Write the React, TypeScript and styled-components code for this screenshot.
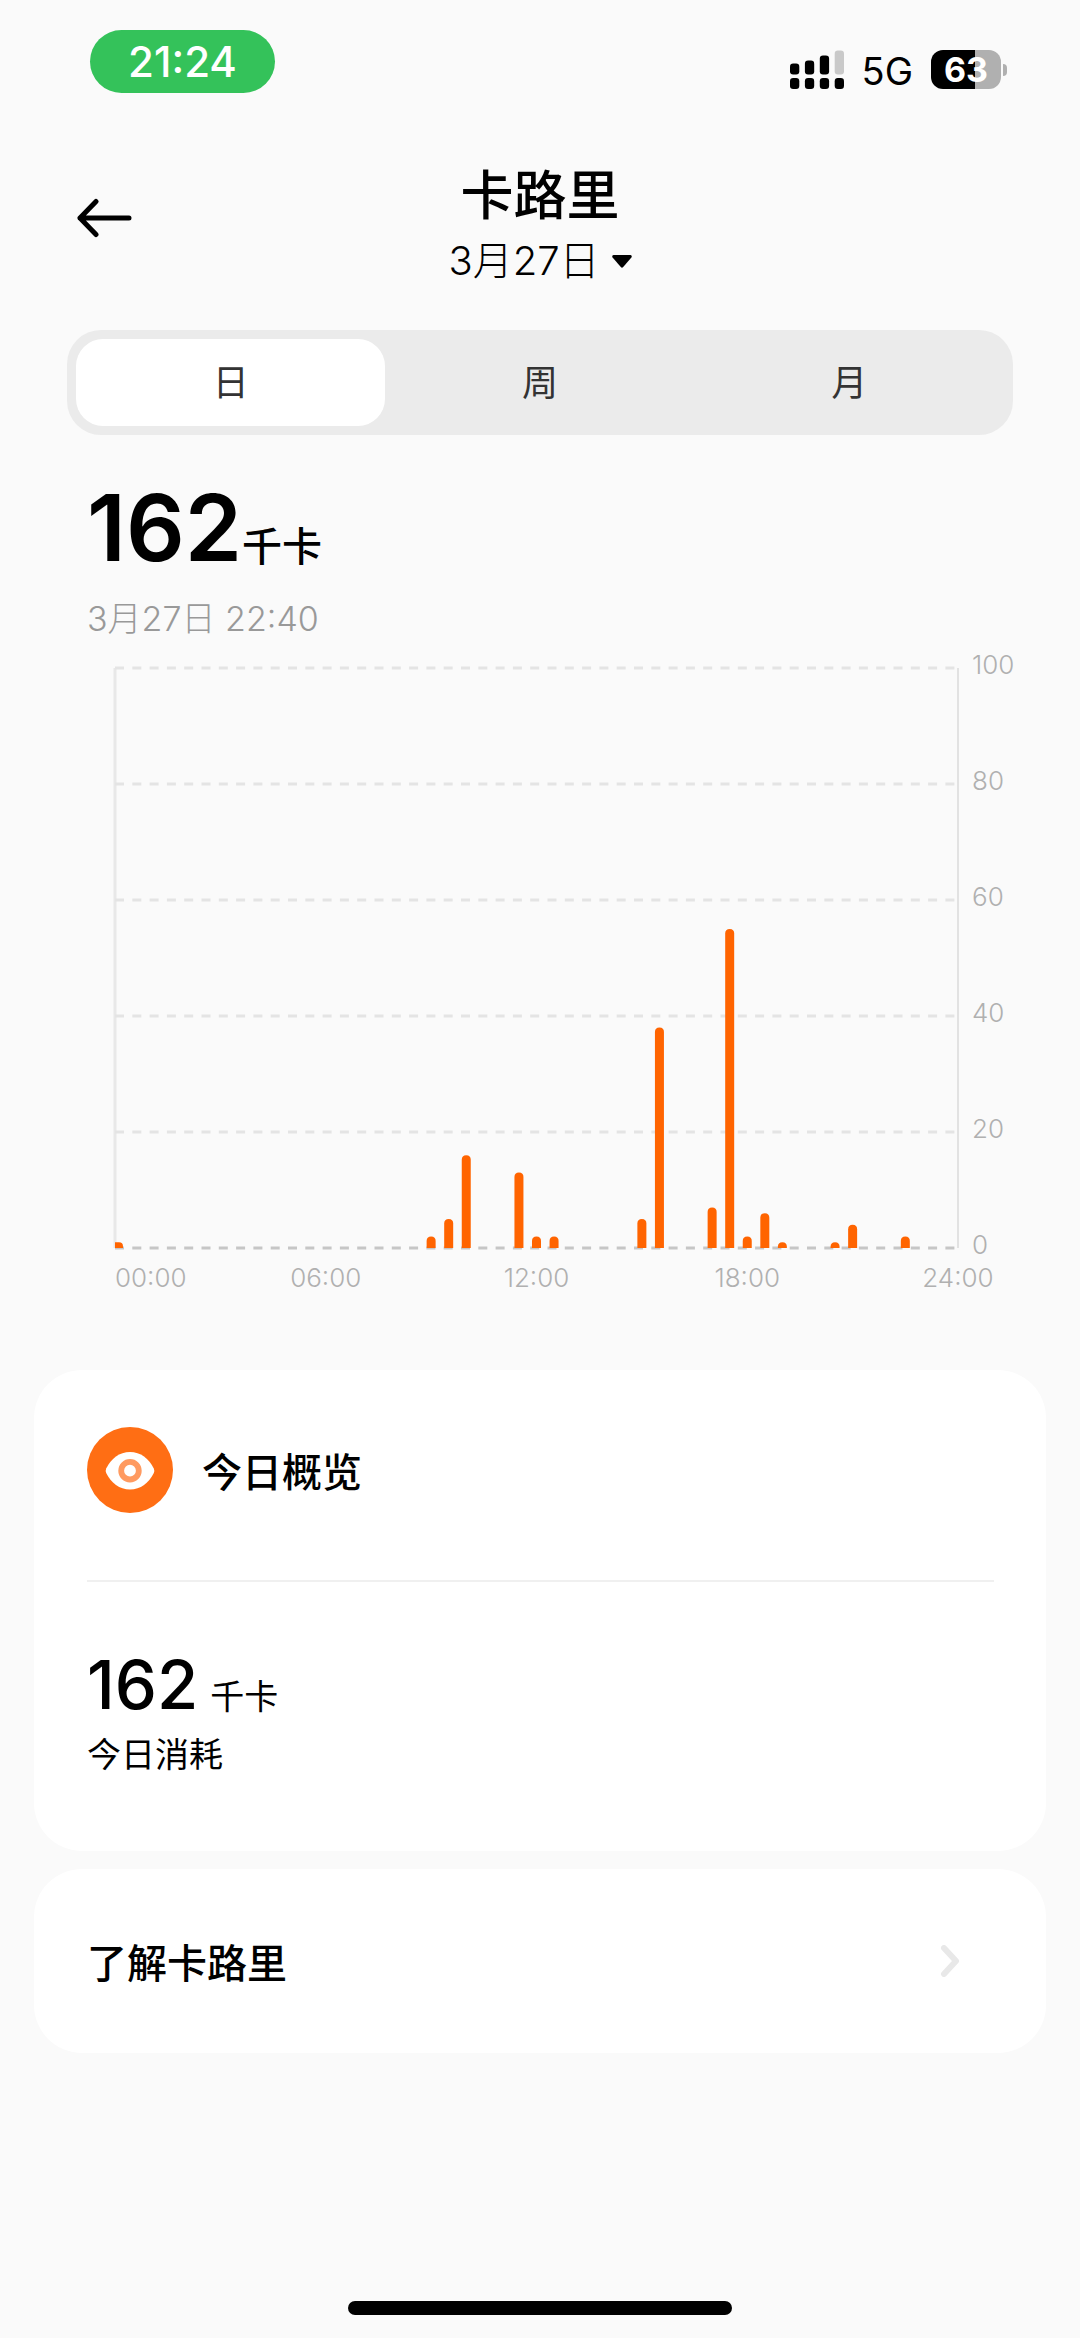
import React, { useState } from "react";
import styled, { createGlobalStyle } from "styled-components";

const GlobalStyle = createGlobalStyle`
  *, *::before, *::after { box-sizing: border-box; }
  body {
    margin: 0;
    background: #fafafa;
    color: #000;
    font-family: Inter, "Noto Sans CJK SC", sans-serif;
  }
  button { border: 0; padding: 0; background: none; color: inherit; font: inherit; cursor: pointer; }
  h1, h2, p { margin: 0; font-weight: inherit; }
`;

const Page = styled.div`
  display: flex;
  flex-direction: column;
  min-height: 100vh;
  padding-bottom: 23px;
`;

const StatusBar = styled.div`
  display: flex;
  justify-content: space-between;
  align-items: flex-end;
  padding: 30px 73px 0 90px;
`;

const TimePill = styled.span`
  display: flex;
  align-items: center;
  justify-content: center;
  width: 185px;
  height: 63px;
  border-radius: 32px;
  background: #34c25a;
  color: #fff;
  font-size: 42px;
  font-weight: 500;
  line-height: 44px;
`;

const StatusIcons = styled.div`
  display: flex;
  align-items: center;
  gap: 18px;
  padding-bottom: 2px;
  font-size: 38px;
  line-height: 40px;
`;

const Network = styled.span`
  padding-top: 3px;
`;

const Battery = styled.span`
  display: flex;
  align-items: center;
  gap: 2px;
`;

const BatteryBody = styled.span`
  display: flex;
  align-items: center;
  justify-content: center;
  width: 70px;
  height: 39px;
  border-radius: 12px;
  background: linear-gradient(to right, #000 63%, #b0b0b0 63%);
  color: #fff;
  font-size: 34px;
  font-weight: 700;
  line-height: 40px;
`;

const BatteryCap = styled.span`
  width: 4px;
  height: 12px;
  border-radius: 0 4px 4px 0;
  background: #b0b0b0;
`;

const Header = styled.header`
  display: grid;
  grid-template-columns: 1fr auto 1fr;
  align-items: start;
  margin-top: 69px;
  padding: 0 76px;
`;

const BackButton = styled.button`
  display: flex;
  align-items: center;
  justify-self: start;
  height: 112px;
`;

const Heading = styled.div`
  display: flex;
  flex-direction: column;
  align-items: center;
  gap: 17px;
`;

const Title = styled.h1`
  font-family: "Noto Sans CJK SC", sans-serif;
  font-size: 53px;
  font-weight: 500;
  line-height: 60px;
`;

const DateButton = styled.button`
  display: flex;
  align-items: center;
  gap: 12px;
  font-size: 40px;
  font-weight: 300;
  line-height: 44px;
`;

const Main = styled.main`
  display: flex;
  flex-direction: column;
`;

const Section = styled.section`
  display: flex;
  flex-direction: column;
  padding: 0 67px;
`;

const Tabs = styled.div`
  display: grid;
  grid-template-columns: repeat(3, 1fr);
  margin-top: 47px;
  padding: 9px;
  border-radius: 34px;
  background: #ebebeb;
`;

const Tab = styled.button<{ $active: boolean }>`
  height: 87px;
  border-radius: 27px;
  background: ${(p) => (p.$active ? "#fff" : "transparent")};
  color: #333;
  font-size: 36px;
  line-height: 44px;
`;

const Reading = styled.div`
  display: flex;
  align-items: baseline;
  margin-top: 45px;
  padding-left: 20px;
`;

const ReadingValue = styled.span`
  font-size: 92px;
  font-weight: 600;
  line-height: 96px;
`;

const ReadingUnit = styled.span`
  font-size: 40px;
  font-weight: 500;
  line-height: 44px;
`;

const ReadingTime = styled.p`
  margin-top: 21px;
  padding-left: 20px;
  color: #999;
  font-size: 34px;
  font-weight: 300;
  line-height: 44px;
`;

const ChartSvg = styled.svg`
  display: block;
  width: 100%;
  height: auto;
  margin-top: 9px;
  overflow: visible;
`;

const AxisText = styled.text`
  fill: #b0b0b0;
  font-family: Inter, sans-serif;
  font-size: 26px;
  font-weight: 300;
`;

const Cards = styled.div`
  display: flex;
  flex-direction: column;
  gap: 18px;
  margin-top: 70px;
  padding: 0 34px;
`;

const Card = styled.section`
  padding: 57px 52px 74px 53px;
  border-radius: 48px;
  background: #fff;
`;

const CardHeader = styled.div`
  display: flex;
  align-items: center;
  gap: 29px;
`;

const CardTitle = styled.h2`
  font-family: "Noto Sans CJK SC", sans-serif;
  font-size: 40px;
  font-weight: 500;
  line-height: 44px;
`;

const Divider = styled.hr`
  height: 2px;
  margin: 67px 0 69px;
  border: 0;
  background: #f0f0f0;
`;

const Total = styled.div`
  display: flex;
  align-items: baseline;
  gap: 12px;
`;

const TotalValue = styled.span`
  font-size: 67px;
  font-weight: 500;
  line-height: 68px;
`;

const TotalUnit = styled.span`
  font-size: 34px;
  line-height: 44px;
`;

const TotalLabel = styled.p`
  margin-top: 14px;
  font-size: 34px;
  line-height: 44px;
`;

const LinkCard = styled.a`
  display: flex;
  align-items: center;
  justify-content: space-between;
  padding: 70px 86px 70px 53px;
  border-radius: 48px;
  background: #fff;
  color: inherit;
  text-decoration: none;
`;

const HomeIndicator = styled.div`
  align-self: center;
  width: 384px;
  height: 14px;
  margin-top: auto;
  border-radius: 7px;
  background: #000;
`;

function SignalIcon() {
  const heights = [11, 14, 19, 24];
  return (
    <svg width="54" height="39" viewBox="0 0 54 39" aria-hidden="true">
      {heights.map((h, i) => (
        <g key={h}>
          <rect x={i * 14.9} y={24.5 - h} width="9.3" height={h} rx="3.2" fill={i === 3 ? "#c9c9c9" : "#000"} />
          <rect x={i * 14.9} y="28" width="9.3" height="11" rx="3.2" fill="#000" />
        </g>
      ))}
    </svg>
  );
}

function BackIcon() {
  return (
    <svg width="56" height="40" viewBox="0 0 56 40" fill="none" stroke="#000" strokeWidth="5" strokeLinecap="round" strokeLinejoin="round" aria-hidden="true">
      <path d="M53 20H4M20 3.5L4 20L20 36.5" />
    </svg>
  );
}

function CaretIcon() {
  return (
    <svg width="20" height="13" viewBox="0 0 20 13" aria-hidden="true">
      <path d="M1.5 0H18.5Q20.5 .6 19.4 2.4L11.2 12Q10 13.3 8.8 12L.6 2.4Q-.5 .6 1.5 0Z" />
    </svg>
  );
}

function EyeIcon() {
  return (
    <svg width="86" height="86" viewBox="0 0 86 86" aria-hidden="true">
      <circle cx="43" cy="43" r="43" fill="#ff6e14" />
      <path d="M19.200 41.500C24 31.500 32.500 25 43 25S62 31.500 66.800 41.500Q67.800 43.700 66.800 46C62 56 53.500 62.500 43 62.500S24 56 19.200 46Q18.200 43.700 19.200 41.500Z" fill="#fff" />
      <circle cx="43" cy="43.700" r="8.800" fill="none" stroke="#ff9a60" strokeWidth="5.800" />
    </svg>
  );
}

function ChevronIcon() {
  return (
    <svg width="20" height="32" viewBox="0 0 20 32" fill="none" stroke="#e8e8e8" strokeWidth="6" strokeLinecap="round" strokeLinejoin="round" aria-hidden="true">
      <path d="M4 3L16 16L4 29" />
    </svg>
  );
}

/* Kilocalories burned per half hour, keyed by half-hour slot of the day. */
const samples: Array<[number, number]> = [
  [0, 1], [18, 2], [19, 5], [20, 16], [23, 13], [24, 2], [25, 2], [30, 5], [31, 38],
  [34, 7], [35, 55], [36, 2], [37, 6], [38, 1], [41, 1], [42, 4], [45, 2],
];

const plot = { left: 48, right: 891, top: 18, bottom: 598 };
const levels = [100, 80, 60, 40, 20, 0];
const hours = ["00:00", "06:00", "12:00", "18:00", "24:00"];

function barPath(slot: number, value: number) {
  const center = plot.left + (slot * (plot.right - plot.left)) / 48;
  const x = Math.max(center - 4.5, plot.left);
  const width = slot === 0 ? 8 : 9;
  const h = (value * (plot.bottom - plot.top)) / 100;
  const r = Math.min(4.5, h * 0.8, width / 2);
  const y = plot.bottom - h;
  const leftRadius = slot === 0 ? 0 : r;
  return `M${x} ${plot.bottom}V${y + leftRadius}Q${x} ${y} ${x + leftRadius} ${y}H${x + width - r}Q${x + width} ${y} ${x + width} ${y + r}V${plot.bottom}Z`;
}

function CalorieChart() {
  return (
    <ChartSvg viewBox="0 0 946 650" role="img" aria-label="卡路里">
      <line x1={plot.left} x2={plot.left} y1={plot.top} y2={plot.bottom} stroke="#e8e8e8" strokeWidth="3" />
      <line x1={plot.right} x2={plot.right} y1={plot.top} y2={plot.bottom} stroke="#e2e2e2" strokeWidth="2" />
      {levels.map((level) => {
        const y = plot.bottom - (level * (plot.bottom - plot.top)) / 100;
        return (
          <g key={level}>
            <line x1={plot.left} x2={plot.right} y1={y} y2={y} stroke={level ? "#e4e4e4" : "#c6c6c6"} strokeWidth="3" strokeDasharray="9 8.3" />
            <AxisText x={plot.right + 14} y={y + 6}>{level}</AxisText>
          </g>
        );
      })}
      {samples.map(([slot, value]) => (
        <path key={slot} d={barPath(slot, value)} fill="#ff6400" />
      ))}
      {hours.map((hour, i) => (
        <AxisText key={hour} x={plot.left + (i * (plot.right - plot.left)) / 4} y="637" textAnchor={i ? "middle" : "start"}>
          {hour}
        </AxisText>
      ))}
    </ChartSvg>
  );
}

const ranges = ["日", "周", "月"];

export default function App() {
  const [range, setRange] = useState("日");
  return (
    <Page>
      <GlobalStyle />
      <StatusBar>
        <TimePill>21:24</TimePill>
        <StatusIcons>
          <SignalIcon />
          <Network>5G</Network>
          <Battery>
            <BatteryBody>63</BatteryBody>
            <BatteryCap />
          </Battery>
        </StatusIcons>
      </StatusBar>
      <Header>
        <BackButton type="button" aria-label="返回"><BackIcon /></BackButton>
        <Heading>
          <Title>卡路里</Title>
          <DateButton type="button">3月27日<CaretIcon /></DateButton>
        </Heading>
      </Header>
      <Main>
        <Section>
          <Tabs role="tablist">
            {ranges.map((name) => (
              <Tab key={name} type="button" role="tab" aria-selected={name === range} $active={name === range} onClick={() => setRange(name)}>
                {name}
              </Tab>
            ))}
          </Tabs>
          <Reading>
            <ReadingValue>162</ReadingValue>
            <ReadingUnit>千卡</ReadingUnit>
          </Reading>
          <ReadingTime>3月27日 22:40</ReadingTime>
          <CalorieChart />
        </Section>
        <Cards>
          <Card>
            <CardHeader>
              <EyeIcon />
              <CardTitle>今日概览</CardTitle>
            </CardHeader>
            <Divider />
            <Total>
              <TotalValue>162</TotalValue>
              <TotalUnit>千卡</TotalUnit>
            </Total>
            <TotalLabel>今日消耗</TotalLabel>
          </Card>
          <LinkCard href="#about">
            <CardTitle>了解卡路里</CardTitle>
            <ChevronIcon />
          </LinkCard>
        </Cards>
      </Main>
      <HomeIndicator />
    </Page>
  );
}
